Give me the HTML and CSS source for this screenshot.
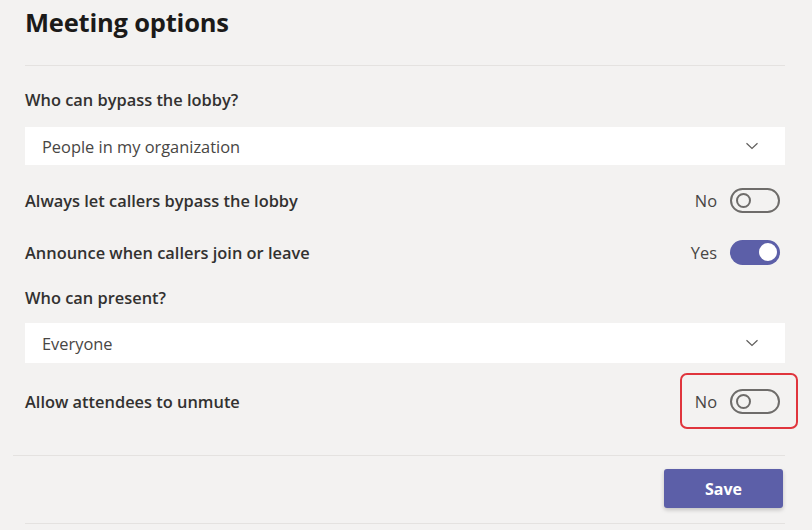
FILE: index.html
```html
<!DOCTYPE html>
<html lang="en">
<head>
<meta charset="utf-8">
<title>Meeting options</title>
<link rel="stylesheet" href="styles.css">
</head>
<body>
<div class="page">
  <h1 class="title">Meeting options</h1>
  <div class="divider"></div>

  <div class="field-label first">Who can bypass the lobby?</div>
  <div class="dropdown d1">
    <span>People in my organization</span>
    <svg class="chevron" width="14" height="8" viewBox="0 0 14 8"><path d="M1.5 1.2l5.5 5.3 5.5-5.3" fill="none" stroke="#605e5c" stroke-width="1.2"/></svg>
  </div>

  <div class="row r1">
    <span class="row-label">Always let callers bypass the lobby</span>
    <div class="toggle-group">
      <span class="toggle-text">No</span>
      <span class="toggle off"><span class="knob"></span></span>
    </div>
  </div>

  <div class="row r2">
    <span class="row-label">Announce when callers join or leave</span>
    <div class="toggle-group">
      <span class="toggle-text">Yes</span>
      <span class="toggle on"><span class="knob"></span></span>
    </div>
  </div>

  <div class="field-label second">Who can present?</div>
  <div class="dropdown d2">
    <span>Everyone</span>
    <svg class="chevron" width="14" height="8" viewBox="0 0 14 8"><path d="M1.5 1.2l5.5 5.3 5.5-5.3" fill="none" stroke="#605e5c" stroke-width="1.2"/></svg>
  </div>

  <div class="row r3">
    <span class="row-label">Allow attendees to unmute</span>
    <div class="toggle-group highlight">
      <span class="toggle-text">No</span>
      <span class="toggle off"><span class="knob"></span></span>
    </div>
  </div>

  <div class="footer-divider"></div>
  <div class="actions">
    <button class="save">Save</button>
  </div>
  <div class="bottom-line"></div>
</div>
</body>
</html>
```

FILE: styles.css
```css
html, body {
  margin: 0;
  padding: 0;
  background: #f3f2f1;
}
body {
  font-family: "Open Sans", "Noto Sans", "Liberation Sans", sans-serif;
  color: #252423;
  width: 812px;
  height: 530px;
  overflow: hidden;
}
.page {
  padding: 0 27px 0 25px;
}
.title {
  margin: 0;
  padding-top: 6px;
  font-size: 25.5px;
  line-height: 32px;
  font-weight: 700;
  color: #1b1a19;
  letter-spacing: -0.2px;
}
.divider {
  margin-top: 27px;
  height: 1px;
  background: #e4e2e0;
}
.field-label {
  font-size: 16.4px;
  font-weight: 600;
  line-height: 20px;
  color: #323130;
}
.field-label.first { margin-top: 24px; }
.field-label.second { margin-top: 24px; }
.dropdown {
  background: #ffffff;
  display: flex;
  align-items: center;
  justify-content: space-between;
  padding: 0 26px 0 17px;
  font-size: 16.4px;
  color: #484644;
}
.dropdown.d1 { margin-top: 17px; height: 38px; }
.dropdown.d2 { margin-top: 15px; height: 40px; }
.chevron { display: block; }
.row {
  display: flex;
  align-items: center;
  justify-content: space-between;
}
.row-label {
  font-size: 16.4px;
  font-weight: 600;
  color: #323130;
}
.r1 { margin-top: 23px; height: 24px; }
.r2 { margin-top: 28px; height: 24px; }
.r3 { margin-top: 10px; }
.toggle-group {
  display: flex;
  align-items: center;
  gap: 13px;
  padding-right: 5px;
}
.toggle-text {
  font-size: 16.4px;
  color: #484644;
}
.toggle {
  box-sizing: border-box;
  width: 50px;
  height: 25px;
  border-radius: 13px;
  display: flex;
  align-items: center;
  padding: 0 3px;
}
.toggle.off {
  border: 2px solid #6e6c6a;
}
.toggle.off .knob {
  box-sizing: border-box;
  width: 15px;
  height: 15px;
  border-radius: 50%;
  border: 2px solid #6e6c6a;
  margin-left: 1px;
}
.toggle.on {
  background: #5c5fa8;
  justify-content: flex-end;
}
.toggle.on .knob {
  width: 18px;
  height: 18px;
  border-radius: 50%;
  background: #ffffff;
}
.highlight {
  border: 2px solid #e0353d;
  border-radius: 7px;
  padding: 14px 16px 13px 13px;
  margin-right: -13px;
}
.footer-divider {
  margin-top: 26px;
  margin-left: -12px;
  height: 1px;
  background: #e4e2e0;
}
.actions {
  display: flex;
  justify-content: flex-end;
  margin-top: 13px;
  padding-right: 2px;
}
.save {
  width: 119px;
  height: 39px;
  border: none;
  border-radius: 3px;
  background: #5c5fa8;
  color: #ffffff;
  font-family: "Open Sans", "Noto Sans", sans-serif;
  font-size: 16px;
  font-weight: 700;
  box-shadow: 0 2px 4px rgba(0,0,0,0.2);
}
.bottom-line {
  margin-top: 15px;
  height: 1px;
  background: #e4e2e0;
}
```
